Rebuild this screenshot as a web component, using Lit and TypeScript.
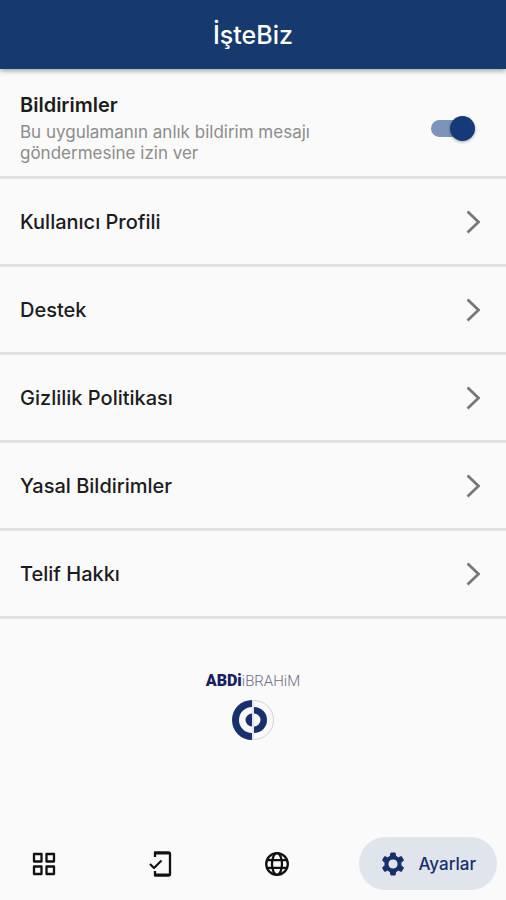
import { LitElement, html, css, svg } from "lit";
import { customElement, state } from "lit/decorators.js";

const gridIcon = svg`<g fill="none" stroke="currentColor" stroke-width="2.3" stroke-linejoin="round">
  <path d="M3 3h7.500v7.500h-7.500z M15.500 3h7.500v7.500h-7.500z M3 15.500h7.500v7.500h-7.500z M15.500 15.500h7.500v7.500h-7.500z"/></g>`;

const phoneIcon = svg`<g fill="none" stroke="currentColor" stroke-linejoin="round">
  <path d="M8 6V1.500H21.500Q23 1.500 23 3V23Q23 24.500 21.500 24.500H8V20" stroke-width="2.300"/>
  <path d="M8.500 2.400H22M8.500 23.600H22" stroke-width="2"/>
  <path d="M3 13L7 17L14.500 9.500" stroke-width="2.200"/></g>`;

const globeIcon = svg`<g fill="none" stroke="currentColor" stroke-width="2.3">
  <circle cx="13" cy="13" r="10.800"/><ellipse cx="13" cy="13" rx="5" ry="10.800"/>
  <path d="M3.500 9.200H22.500M3.500 16.800H22.500"/></g>`;

const gearIcon = svg`<g fill="currentColor" stroke="currentColor" stroke-linejoin="round"><path fill-rule="evenodd" d="M10.900 2h4.200l.6 3.300a8.500 8.500 0 0 1 2.600 1.500l3.100-1.200 2.100 3.700-2.600 2.200a8.500 8.500 0 0 1 0 3l2.600 2.200-2.100 3.700-3.100-1.200a8.500 8.500 0 0 1-2.600 1.500l-.6 3.300h-4.200l-.6-3.300a8.500 8.500 0 0 1-2.600-1.500l-3.100 1.200-2.100-3.700 2.600-2.200a8.500 8.500 0 0 1 0-3l-2.600-2.200 2.100-3.700 3.100 1.200a8.500 8.500 0 0 1 2.600-1.500zM13 7.900a5.100 5.100 0 1 0 0 10.200a5.100 5.100 0 1 0 0-10.200z"/></g>`;

const rows = ["Kullanıcı Profili", "Destek", "Gizlilik Politikası", "Yasal Bildirimler", "Telif Hakkı"];

const tabs = [
  { name: "Menü", icon: gridIcon },
  { name: "Onaylar", icon: phoneIcon },
  { name: "Dil", icon: globeIcon },
  { name: "Ayarlar", icon: gearIcon },
];

@customElement("app-root")
export class AppRoot extends LitElement {
  @state() private active = 3;

  static styles = css`
    :host {
      display: flex;
      flex-direction: column;
      min-height: 100vh;
      background: #fafafa;
      color: #1c1c1c;
      font-family: Inter, "Liberation Sans", sans-serif;
    }
    * { box-sizing: border-box; }
    button { font: inherit; color: inherit; border: 0; background: none; margin: 0; cursor: pointer; }
    header {
      height: 69px;
      display: flex;
      align-items: center;
      justify-content: center;
      background: #163a6e;
      color: #fff;
      box-shadow: 0 2px 5px rgba(0, 0, 0, 0.35);
    }
    h1 { margin: 0; font-size: 25px; line-height: 28px; font-weight: 500; }
    ul { list-style: none; margin: 0; padding: 0; }
    .notify, .row {
      display: flex;
      align-items: center;
      justify-content: space-between;
      width: 100%;
      border-bottom: 3px solid #e1e1e1;
    }
    .notify { height: 110px; padding: 11px 31px 0 20px; }
    .name { display: block; font-size: 20px; line-height: 26px; margin-bottom: 4px; font-weight: 600; }
    .hint { display: block; font-size: 17px; line-height: 21px; color: #8c8c8c; max-width: 320px; }
    .row { height: 88px; padding: 0 26px 0 20px; text-align: left; font-size: 20px; font-weight: 500; }
    .chevron { width: 14px; height: 24px; flex: none; color: #777; }
    .switch {
      appearance: none;
      position: relative;
      flex: none;
      width: 44px;
      height: 25px;
      margin: 0;
      cursor: pointer;
    }
    .switch::before {
      content: "";
      position: absolute;
      inset: 4px 2px 4px 0;
      border-radius: 9px;
      background: #bbb;
    }
    .switch::after {
      content: "";
      position: absolute;
      left: 0;
      top: 0;
      width: 25px;
      height: 25px;
      border-radius: 50%;
      background: #f1f1f1;
      box-shadow: 0 1px 3px rgba(0, 0, 0, 0.35);
    }
    .switch:checked::before { background: #7c94b7; }
    .switch:checked::after { left: auto; right: 0; background: #153a77; }
    .brand {
      flex: 1;
      display: flex;
      flex-direction: column;
      align-items: center;
      gap: 8px;
      padding-top: 52px;
      color: #17306e;
    }
    .word { font-family: Roboto, sans-serif; font-size: 16px; line-height: 20px; color: #6a6c80; font-weight: 300; display: flex; align-items: baseline; }
    .word b { font-weight: 900; color: #17205e; }
    .word span { font-size: 15px; }
    .mark { width: 42px; height: 42px; }
    nav {
      display: flex;
      align-items: center;
      justify-content: space-between;
      padding: 10px 9px 10px 10px;
    }
    .tab {
      display: flex;
      align-items: center;
      gap: 12px;
      height: 53px;
      padding: 0 21px;
      border-radius: 27px;
      color: #111;
      font-size: 17px;
      font-weight: 500;
    }
    .tab.on { background: #e0e4eb; color: #16306b; }
    .tab svg { width: 26px; height: 26px; flex: none; }
  `;

  render() {
    return html`
      <header><h1>İşteBiz</h1></header>
      <main>
        <div class="notify">
          <label for="push"><span class="name">Bildirimler</span>
            <span class="hint">Bu uygulamanın anlık bildirim mesajı göndermesine izin ver</span></label>
          <input class="switch" id="push" type="checkbox" role="switch" checked />
        </div>
        <ul>
          ${rows.map((r) => html`<li><button class="row">${r}
            <svg class="chevron" viewBox="0 0 14 24" aria-hidden="true">
              <path d="M1.500 1.500L12.500 12L1.500 22.500" fill="none" stroke="currentColor" stroke-width="2.700"/>
            </svg></button></li>`)}
        </ul>
      </main>
      <section class="brand">
        <div class="word"><b>ABDi</b><span>iBRAHiM</span></div>
        <svg class="mark" viewBox="0 0 42 42" aria-hidden="true">
          <path d="M20 1A20 20 0 0 0 20 41V34A13 13 0 0 1 20 8Z" fill="currentColor"/>
          <path d="M20 14.500A6.500 6.500 0 0 0 20 27.500Z" fill="currentColor"/>
          <path d="M22 8A13 13 0 0 1 22 34V27.500A6.500 6.500 0 0 0 22 14.500Z" fill="currentColor"/>
          <path d="M22 1.500A19.500 19.500 0 0 1 22 40.500" fill="none" stroke="#cfd2dc"/>
          <path d="M21 1V41" stroke="#cfd2dc"/>
        </svg>
      </section>
      <nav>
        ${tabs.map((t, i) => html`<button class="tab ${i === this.active ? "on" : ""}" aria-label=${t.name}
          @click=${() => (this.active = i)}>
          <svg viewBox="0 0 26 26" aria-hidden="true">${t.icon}</svg>${i === this.active ? html`<span>${t.name}</span>` : ""}
        </button>`)}
      </nav>
    `;
  }
}
